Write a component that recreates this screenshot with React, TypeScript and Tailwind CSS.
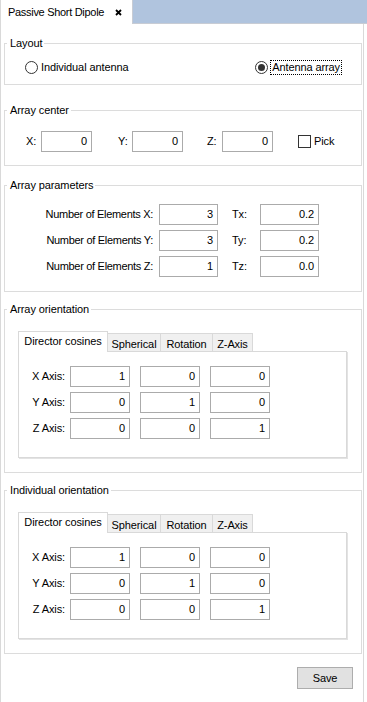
import React from "react";

const Field = ({ w, v }: { w: string; v: string }) => (
  <div className={`${w} h-[21px] border border-[#ababab] bg-white text-right pr-[4px] leading-[19px] text-[#000]`}>{v}</div>
);

const Group = ({ title, children, className }: { title: string; children: React.ReactNode; className?: string }) => (
  <fieldset className={`border border-[#dcdcdc] px-0 ${className ?? ""}`}>
    <legend className="ml-[2px] pl-[3px] pr-[2px] leading-[14px]">{title}</legend>
    {children}
  </fieldset>
);

const TabWidget = () => {
  const rows = [
    ["X Axis:", "1", "0", "0"],
    ["Y Axis:", "0", "1", "0"],
    ["Z Axis:", "0", "0", "1"],
  ];
  return (
    <div className="ml-[13px] mr-[13px] mt-[15px]">
      <div className="flex items-end">
        <div className="relative z-10 -mb-[1px] w-[90px] h-[21px] bg-white border-t border-l border-r border-[#d9d9d9] text-center leading-[18px]">
          Director cosines
        </div>
        <div className="w-[53px] h-[18px] bg-[#f0f0f0] border-t border-r border-[#d9d9d9] text-center leading-[20px]">Spherical</div>
        <div className="w-[52px] h-[18px] bg-[#f0f0f0] border-t border-r border-[#d9d9d9] text-center leading-[20px]">Rotation</div>
        <div className="w-[40px] h-[18px] bg-[#f0f0f0] border-t border-r border-[#d9d9d9] text-center leading-[20px]">Z-Axis</div>
      </div>
      <div className="w-[329px] h-[107px] border border-[#d9d9d9] bg-white shadow-[1px_1px_0_#e3e3e3] pt-[14px] flex flex-col gap-[5px]">
        {rows.map((r) => (
          <div key={r[0]} className="flex items-center">
            <div className="w-[46px] text-right">{r[0]}</div>
            <Field w="ml-[5px] w-[60px]" v={r[1]} />
            <Field w="ml-[10px] w-[60px]" v={r[2]} />
            <Field w="ml-[10px] w-[60px]" v={r[3]} />
          </div>
        ))}
      </div>
    </div>
  );
};

export default function App() {
  return (
    <div className="w-[367px] h-[702px] bg-white flex flex-col overflow-hidden font-['Liberation_Sans',Arial,sans-serif] text-[11px] tracking-[-0.1px] text-[#000]">
      <div className="flex h-[24px] shrink-0">
        <div className="w-[132px] border-l border-[#d9d9d9] bg-white flex items-center justify-between pl-[7px] pr-[10px]">
          <span className="tracking-[-0.3px]">Passive Short Dipole</span>
          <svg width="7" height="7" viewBox="0 0 7 7">
            <path d="M1 1 L6 6 M6 1 L1 6" stroke="#000" strokeWidth="1.8" />
          </svg>
        </div>
        <div className="flex-1 bg-[#b0c4de] border-l border-b border-[#c8ccd4]"></div>
      </div>
      <div className="w-[364px] flex-1 border-l border-r border-[#d9d9d9] pl-[3px] pr-[1px] pt-[12px]">
        <Group title="Layout">
          <div className="flex items-center justify-between h-[16px] mt-[9px] mb-[9px] pl-[20px] pr-[20px]">
            <div className="flex items-center">
              <div className="w-[13px] h-[13px] rounded-full border border-[#333] bg-white"></div>
              <span className="ml-[3px]">Individual antenna</span>
            </div>
            <div className="flex items-center">
              <div className="w-[13px] h-[13px] rounded-full border border-[#333] bg-white flex items-center justify-center">
                <div className="w-[7px] h-[7px] rounded-full bg-[#333]"></div>
              </div>
              <span className="ml-[3px] outline outline-1 outline-dotted outline-[#000] px-[1px] leading-[13px]">Antenna array</span>
            </div>
          </div>
        </Group>
        <Group title="Array center" className="mt-[18px]">
          <div className="flex items-center mt-[14px] mb-[13px] pl-[21px]">
            <span className="w-[15px]">X:</span>
            <Field w="w-[51px]" v="0" />
            <span className="ml-[26px] w-[14px]">Y:</span>
            <Field w="w-[51px]" v="0" />
            <span className="ml-[24px] w-[15px]">Z:</span>
            <Field w="w-[51px]" v="0" />
            <div className="ml-[25px] w-[13px] h-[13px] border border-[#333] bg-white"></div>
            <span className="ml-[3px]">Pick</span>
          </div>
        </Group>
        <Group title="Array parameters" className="mt-[12px]">
          <div className="flex flex-col gap-[5px] mt-[12px] mb-[14px]">
            {[
              ["Number of Elements X:", "3", "Tx:", "0.2"],
              ["Number of Elements Y:", "3", "Ty:", "0.2"],
              ["Number of Elements Z:", "1", "Tz:", "0.0"],
            ].map((r) => (
              <div key={r[0]} className="flex items-center">
                <span className="w-[148px] text-right tracking-[-0.3px]">{r[0]}</span>
                <Field w="ml-[6px] w-[59px]" v={r[1]} />
                <span className="ml-[14px] w-[28px]">{r[2]}</span>
                <Field w="w-[59px]" v={r[3]} />
              </div>
            ))}
          </div>
        </Group>
        <Group title="Array orientation" className="mt-[10px] pb-[14px]">
          <TabWidget />
        </Group>
        <Group title="Individual orientation" className="mt-[10px] pb-[14px]">
          <TabWidget />
        </Group>
        <div className="flex justify-end pr-[9px] mt-[13px]">
          <div className="w-[56px] h-[22px] bg-[#e1e1e1] border border-[#adadad] text-center leading-[20px]">Save</div>
        </div>
      </div>
    </div>
  );
}
